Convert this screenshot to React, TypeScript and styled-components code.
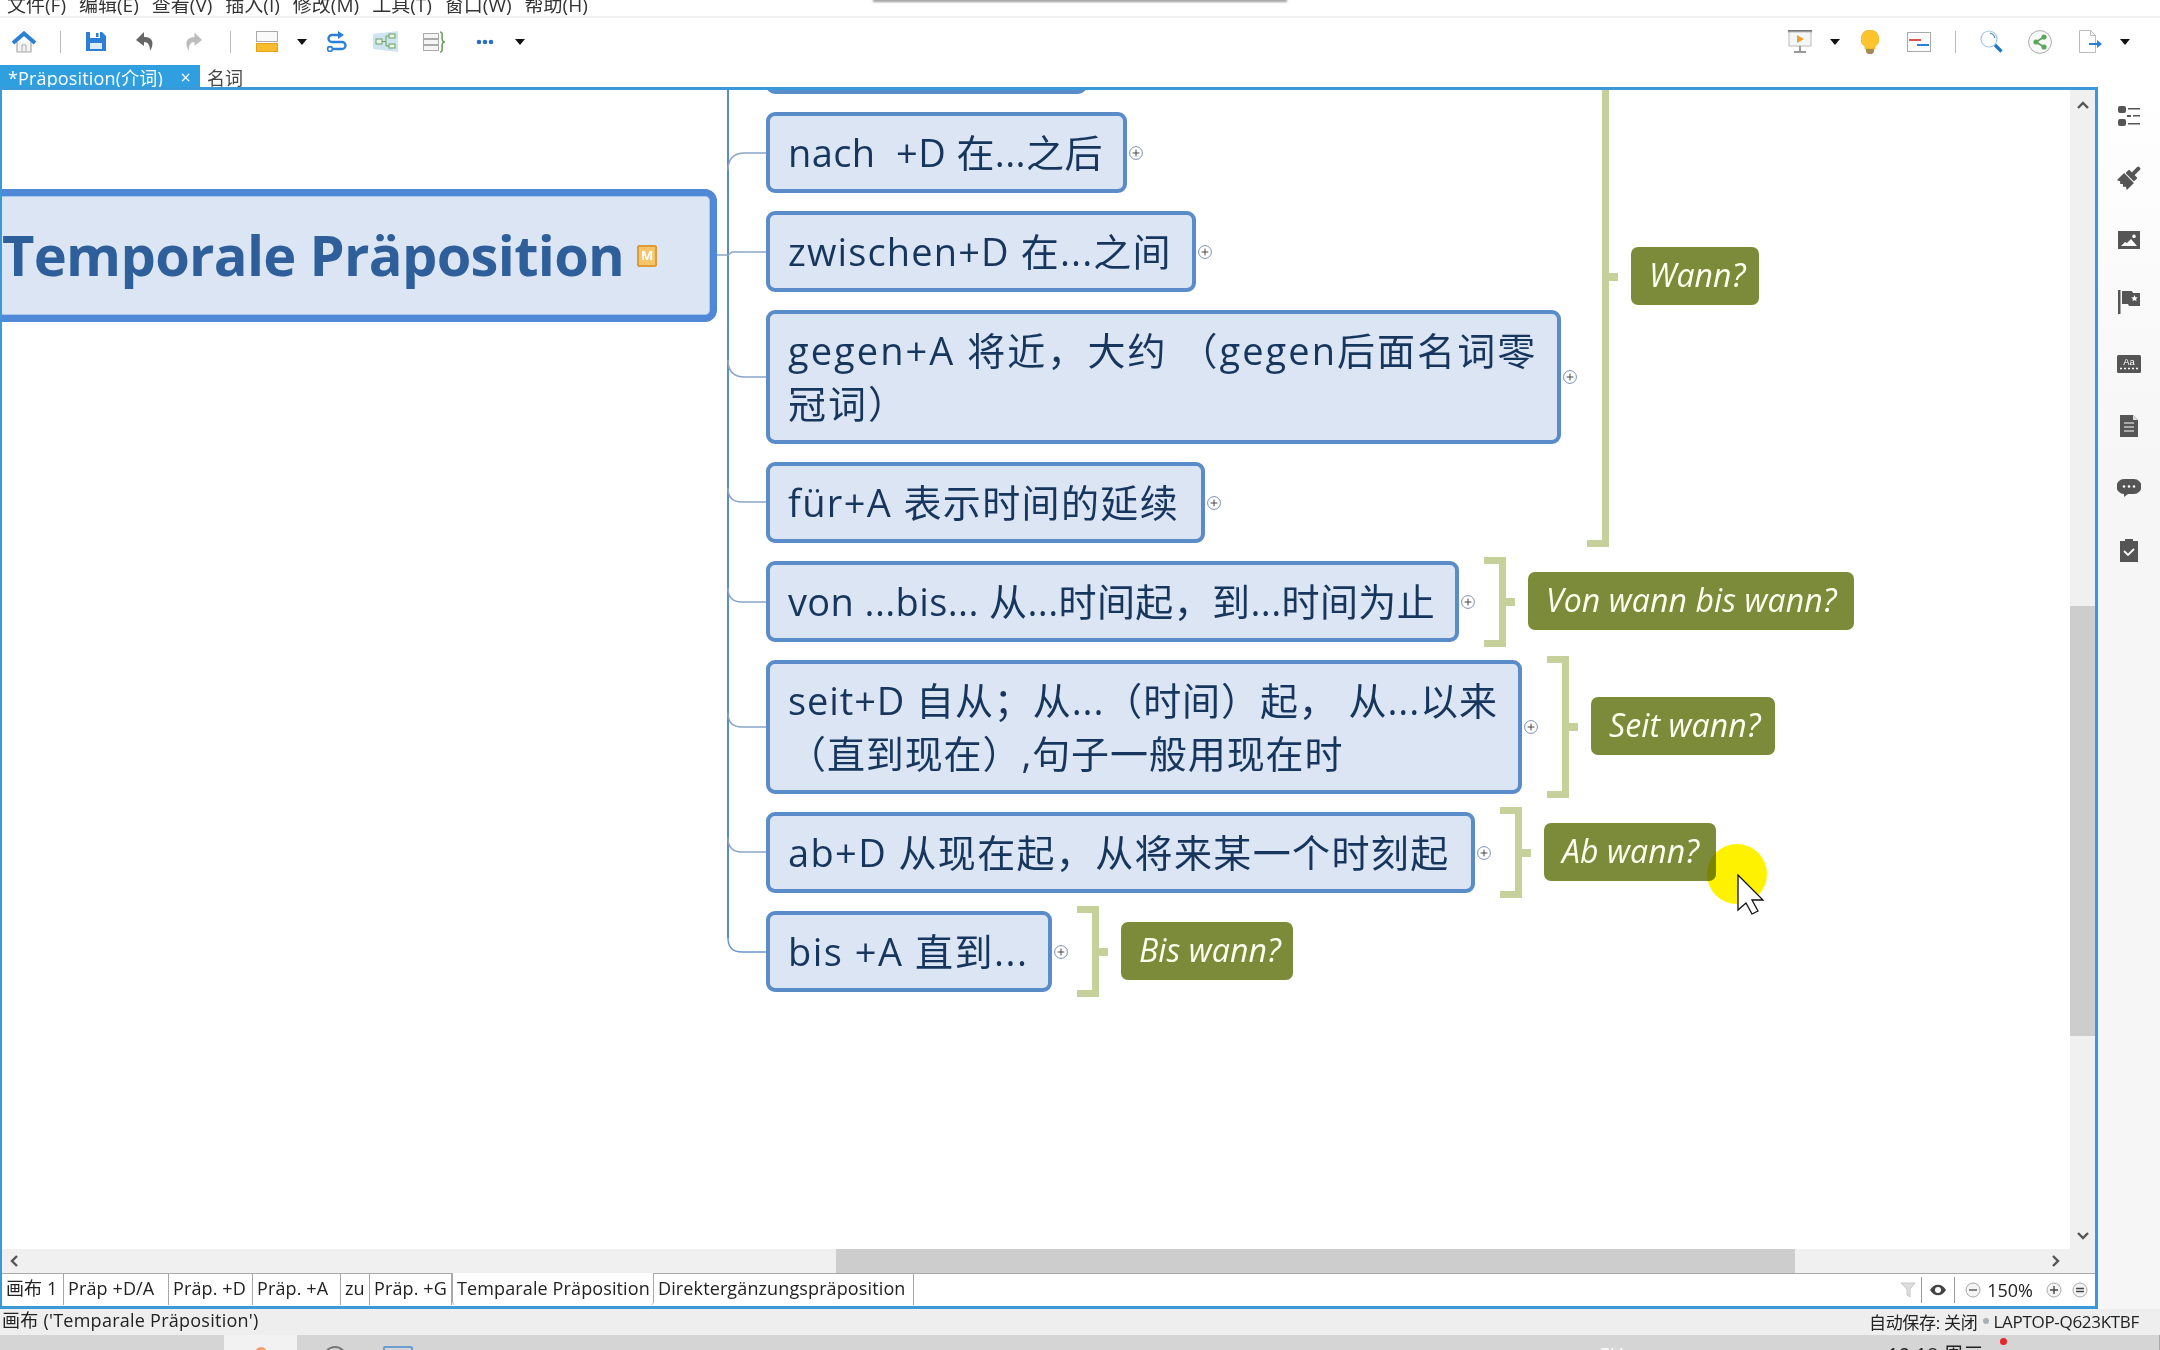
import React from "react";
import styled, { createGlobalStyle } from "styled-components";

const SANS = `"Open Sans", "Noto Sans CJK SC", sans-serif`;
const BLUE = "#3a9ad9";

const Global = createGlobalStyle`
	html, body {
		margin: 0;
		padding: 0;
		background: #fff;
	}
	* {
		box-sizing: border-box;
	}
`;

const Page = styled.div`
	position: relative;
	width: 2160px;
	height: 1350px;
	display: flex;
	flex-direction: column;
	overflow: hidden;
	font-family: ${SANS};
	color: #222;
`;

const MenuBar = styled.div`
	position: relative;
	height: 18px;
	flex: none;
	display: flex;
	gap: 13px;
	padding-left: 7px;
	overflow: hidden;
	border-bottom: 2px solid #f1f1f1;
`;

const MenuItem = styled.span`
	margin-top: -4px;
	font-size: 19px;
	line-height: 18px;
	color: #333;
	white-space: nowrap;
`;

const BlurTitle = styled.div`
	position: absolute;
	top: -1px;
	left: 873px;
	width: 414px;
	height: 3px;
	background: #999;
	filter: blur(1px);
`;

const ToolBar = styled.div`
	height: 47px;
	flex: none;
	display: flex;
	align-items: center;
	padding: 0 30px 0 11px;
`;

const Tool = styled.span<{ $ml?: number }>`
	display: flex;
	flex: none;
	margin-left: ${(p) => p.$ml ?? 0}px;
`;

const ToolSep = styled.span<{ $ml: number }>`
	width: 1px;
	height: 22px;
	flex: none;
	margin-left: ${(p) => p.$ml}px;
	background: #bbb;
`;

const Caret = styled.span<{ $ml: number }>`
	width: 0;
	height: 0;
	flex: none;
	margin-left: ${(p) => p.$ml}px;
	border-left: 5.5px solid transparent;
	border-right: 5.5px solid transparent;
	border-top: 6px solid #111;
`;

const ToolSpring = styled.span`
	flex: 1;
`;

const TabRow = styled.div`
	height: 22px;
	flex: none;
	display: flex;
	align-items: stretch;
`;

const DocTab = styled.div`
	width: 200px;
	display: flex;
	align-items: center;
	justify-content: space-between;
	padding: 2px 9px 0 8px;
	background: #2f9fe0;
	color: #fff;
	font-size: 18px;
	letter-spacing: 0.15px;
	white-space: nowrap;
`;

const DocTabPlain = styled.div`
	margin-left: 7px;
	font-size: 18px;
	line-height: 26px;
	color: #444;
`;

const Workspace = styled.div`
	height: 1222px;
	flex: none;
	display: flex;
`;

const Frame = styled.div`
	width: 2098px;
	flex: none;
	display: grid;
	grid-template-columns: 2068px 25px;
	grid-template-rows: 1159px 24px 32px;
	border: 3px solid ${BLUE};
	border-left-width: 2px;
`;

const Canvas = styled.div`
	grid-column: 1;
	grid-row: 1;
	position: relative;
	overflow: hidden;
	background: #fff;
`;

const Links = styled.svg`
	position: absolute;
	left: 0;
	top: 0;
	pointer-events: none;
`;

const RootTopic = styled.div`
	position: absolute;
	left: -14px;
	top: 99px;
	width: 729px;
	height: 133px;
	display: flex;
	align-items: center;
	gap: 13px;
	padding: 0 0 3px 7px;
	background: #dbe5f3;
	border: 7px solid #4f88d6;
	border-radius: 12px;
	box-shadow: inset 0 0 0 1px #a9c7ee;
	color: #2f5f9b;
	font-size: 56px;
	font-weight: 700;
	letter-spacing: -0.7px;
	white-space: nowrap;
`;

const MarkerM = styled.span`
	width: 20px;
	height: 22px;
	flex: none;
	display: flex;
	align-items: center;
	justify-content: center;
	margin-top: 3px;
	background: #f6c56a;
	border: 2px solid #dd9d36;
	border-radius: 2px;
	color: #fff;
	font-size: 13px;
	line-height: 1;
	font-weight: 700;
	letter-spacing: 0;
`;

const TopicColumn = styled.div`
	position: absolute;
	left: 764px;
	top: -77px;
	display: flex;
	flex-direction: column;
	gap: 18px;
`;

const Row = styled.div`
	display: flex;
	align-items: center;
`;

const Topic = styled.div<{ $w: number; $ls?: number }>`
	width: ${(p) => p.$w}px;
	flex: none;
	padding: 10px 0 10px 18px;
	background: #dbe5f3;
	border: 4px solid #5a8cca;
	border-radius: 9px;
	color: #17365d;
	font-size: 38px;
	letter-spacing: ${(p) => p.$ls ?? 0}px;
	line-height: 53px;
	white-space: nowrap;
`;

const ExpanderIcon = styled.svg`
	flex: none;
	margin-left: 2px;
`;

const Bracket = styled.div<{ $h: number }>`
	position: relative;
	width: 22px;
	height: ${(p) => p.$h}px;
	flex: none;
	border: 7px solid #c6d09b;
	border-left: none;
	&::after {
		content: "";
		position: absolute;
		left: 15px;
		top: calc(50% - 4px);
		width: 16px;
		height: 8px;
		background: #c6d09b;
	}
`;

const SummaryBracket = styled(Bracket)`
	margin: -6px 0 -6px 9px;
`;

const Label = styled.div<{ $w: number }>`
	width: ${(p) => p.$w}px;
	height: 58px;
	flex: none;
	margin: -2px 0 0 22px;
	padding-left: 18px;
	background: #7b8b3a;
	border-radius: 7px;
	color: #fffff0;
	font-size: 32px;
	font-style: italic;
	letter-spacing: 0.1px;
	line-height: 56px;
	white-space: nowrap;
`;

const WannGroup = styled.div`
	position: absolute;
	left: 1585px;
	top: -83px;
	display: flex;
	align-items: center;
`;

const MouseSpot = styled.div`
	position: absolute;
	left: 1705px;
	top: 754px;
	width: 60px;
	height: 60px;
	border-radius: 50%;
	background: #fff200;
	mix-blend-mode: multiply;
`;

const Pointer = styled.svg`
	position: absolute;
	left: 1735px;
	top: 784px;
`;

const VScroll = styled.div`
	grid-column: 2;
	grid-row: 1 / 3;
	display: flex;
	flex-direction: column;
	background: #f0f0f0;
`;

const HScroll = styled.div`
	grid-column: 1;
	grid-row: 2;
	display: flex;
	background: #f0f0f0;
`;

const ScrollButton = styled.div<{ $w: number; $h: number; $auto?: boolean }>`
	width: ${(p) => p.$w}px;
	height: ${(p) => p.$h}px;
	flex: none;
	display: flex;
	align-items: center;
	justify-content: center;
	${(p) => (p.$auto ? "margin: auto 0 0 auto;" : "")}
`;

const ScrollThumb = styled.div<{ $start: number; $len: number; $vertical?: boolean }>`
	flex: none;
	background: #cdcdcd;
	${(p) =>
		p.$vertical
			? `margin-top: ${p.$start}px; height: ${p.$len}px;`
			: `margin-left: ${p.$start}px; width: ${p.$len}px;`}
`;

const SheetBar = styled.div`
	grid-column: 1 / 3;
	grid-row: 3;
	display: flex;
	align-items: stretch;
	background: #fff;
	border-top: 1px solid #a8a8a8;
`;

const Sheet = styled.div<{ $w: number; $active?: boolean }>`
	width: ${(p) => p.$w}px;
	flex: none;
	padding: 0 0 0 4px;
	font-size: 18px;
	line-height: 29px;
	letter-spacing: 0.12px;
	white-space: nowrap;
	border-right: 1px solid #a8a8a8;
	${(p) =>
		p.$active
			? `margin-top: -1px; line-height: 31px; border-left: 1px solid #a8a8a8; border-radius: 0 0 4px 4px; background: #fff;`
			: ""}
`;

const SheetTools = styled.div`
	margin-left: auto;
	display: flex;
	align-items: center;
	padding-right: 7px;
`;

const ViewSep = styled.span<{ $ml: number }>`
	width: 1px;
	height: 26px;
	margin-left: ${(p) => p.$ml}px;
	background: #9a9a9a;
`;

const Zoom = styled.span`
	margin-left: 6px;
	font-size: 18px;
	letter-spacing: 0;
`;

const SideBar = styled.div`
	width: 62px;
	flex: none;
	display: flex;
	flex-direction: column;
	align-items: center;
	gap: 38px;
	padding: 17px 0 0 0;
	background: linear-gradient(#fff, #f6f6f6 30%);
`;

const SideIcon = styled.svg`
	flex: none;
	fill: #555;
`;

const StatusBar = styled.div`
	height: 26px;
	flex: none;
	display: flex;
	align-items: center;
	padding: 0 21px 2px 2px;
	background: #eeeeee;
	font-size: 18px;
	letter-spacing: 0.25px;
	white-space: nowrap;
`;

const StatusName = styled.span`
	margin-bottom: 4px;
`;

const StatusRight = styled.div`
	margin-left: auto;
	display: flex;
	align-items: center;
	font-size: 17px;
	letter-spacing: -0.3px;
`;

const StatusDot = styled.span`
	width: 6px;
	height: 6px;
	margin: 0 4px 0 6px;
	border-radius: 50%;
	background: #aab0b5;
`;

const TaskBar = styled.div`
	position: relative;
	flex: 1;
	display: flex;
	overflow: hidden;
	background: #d5d5d5;
	border-right: 1px solid #aaa;
`;

const ActiveTask = styled.div`
	width: 73px;
	margin-left: 224px;
	display: flex;
	justify-content: center;
	padding-top: 12px;
	background: #f2f2f2;
`;

const TaskGlyph = styled.span<{ $color: string; $ml?: number; $round?: boolean; $w: number }>`
	width: ${(p) => p.$w}px;
	height: 24px;
	margin-left: ${(p) => p.$ml ?? 0}px;
	margin-top: 11px;
	flex: none;
	border: 2px solid ${(p) => p.$color};
	border-radius: ${(p) => (p.$round ? "50%" : "2px")};
`;

const TaskText = styled.span<{ $ml: number; $color?: string }>`
	margin-left: ${(p) => p.$ml}px;
	margin-top: 8px;
	font-size: 20px;
	line-height: 24px;
	white-space: nowrap;
	color: ${(p) => p.$color ?? "#222"};
`;

const RedDot = styled.span`
	position: absolute;
	left: 2000px;
	top: 3px;
	width: 7px;
	height: 7px;
	border-radius: 50%;
	background: #e8262a;
`;

const Expander = () => (
	<ExpanderIcon width="14" height="14" viewBox="0 0 14 14">
		<circle cx="7" cy="7" r="6.4" fill="#fff" stroke="#7d8fb3" />
		<path d="M7 3.6v6.8M3.6 7h6.8" stroke="#444" />
	</ExpanderIcon>
);

const Chevron = ({ d }: { d: string }) => (
	<svg width="14" height="14" viewBox="0 0 14 14">
		<path d={d} fill="none" stroke="#555" strokeWidth="2.4" />
	</svg>
);

const rows = [
	{ w: 321, text: <>&nbsp;</> },
	{ w: 361, ls: 0.4, text: <>nach &nbsp;+D 在...之后</>, expand: true },
	{ w: 430, ls: 1.14, text: <>zwischen+D 在...之间</>, expand: true },
	{ w: 795, ls: 2.05, text: <>gegen+A 将近，大约 （gegen后面名词零<br />冠词）</>, expand: true },
	{ w: 439, ls: 1.37, text: <>für+A 表示时间的延续</>, expand: true },
	{ w: 693, ls: 0.38, text: <>von ...bis... 从...时间起，到...时间为止</>, expand: true, label: "Von wann bis wann?", lw: 326, bh: 90 },
	{ w: 756, ls: 0.9, text: <>seit+D 自从；从...（时间）起， 从...以来<br />（直到现在）,句子一般用现在时</>, expand: true, label: "Seit wann?", lw: 184, bh: 142 },
	{ w: 709, ls: 1.37, text: <>ab+D 从现在起，从将来某一个时刻起</>, expand: true, label: "Ab wann?", lw: 172, bh: 91 },
	{ w: 286, ls: 1.5, text: <>bis +A 直到...</>, expand: true, label: "Bis wann?", lw: 172, bh: 91 },
];

const sheets = [
	{ w: 62, name: "画布 1" },
	{ w: 105, name: "Präp +D/A" },
	{ w: 84, name: "Präp. +D" },
	{ w: 88, name: "Präp. +A" },
	{ w: 29, name: "zu" },
	{ w: 82, name: "Präp. +G" },
	{ w: 202, name: "Temparale Präposition", active: true },
	{ w: 260, name: "Direktergänzungspräposition" },
];

const menus = ["文件(F)", "编辑(E)", "查看(V)", "插入(I)", "修改(M)", "工具(T)", "窗口(W)", "帮助(H)"];

export default function App() {
	return (
		<Page>
			<Global />
			<MenuBar>
				{menus.map((m) => (
					<MenuItem key={m}>{m}</MenuItem>
				))}
				<BlurTitle />
			</MenuBar>

			<ToolBar>
				<Tool>
					<svg width="26" height="22" viewBox="0 0 26 22">
						<path d="M6 11v10h14V11" fill="#f4f4f4" stroke="#aaa" strokeWidth="1.2" />
						<path d="M11 21v-7h4v7" fill="none" stroke="#aaa" />
						<path d="M2 12 13 2.5 24 12" fill="none" stroke="#2b80d6" strokeWidth="4" />
					</svg>
				</Tool>
				<ToolSep $ml={23} />
				<Tool $ml={24}>
					<svg width="22" height="21" viewBox="0 0 22 21">
						<path d="M1 1h16l4 4v15H1z" fill="#2b80d6" />
						<rect x="5" y="1" width="10" height="6" fill="#fff" />
						<rect x="11" y="2" width="2.5" height="4" fill="#2b80d6" />
						<rect x="5" y="12" width="12" height="6" fill="#dcebf8" />
					</svg>
				</Tool>
				<Tool $ml={28}>
					<svg width="19" height="21" viewBox="0 0 19 21">
						<path d="M9 1 1 9l8 6v-4c4 0 6 3 6 9 4-6 4-14-6-14z" fill="#666" />
					</svg>
				</Tool>
				<Tool $ml={31}>
					<svg width="18" height="21" viewBox="0 0 19 21">
						<path d="M10 1l8 8-8 6v-4c-4 0-6 3-6 9C0 14 0 6 10 6z" fill="#bdbdbd" />
					</svg>
				</Tool>
				<ToolSep $ml={27} />
				<Tool $ml={25}>
					<svg width="22" height="21" viewBox="0 0 22 21">
						<rect x="0.5" y="0.5" width="21" height="10" fill="#fafafa" stroke="#aaa" />
						<rect x="0.5" y="12.5" width="21" height="8" fill="#f8bc2c" stroke="#e3a21c" />
					</svg>
				</Tool>
				<Caret $ml={19} />
				<Tool $ml={19}>
					<svg width="22" height="21" viewBox="0 0 22 21">
						<path d="M13 4H6a3.5 3.5 0 0 0 0 7h10a3.5 3.5 0 0 1 0 7H6" fill="none" stroke="#2b80d6" strokeWidth="2.4" />
						<path d="M12 0l6 4-6 4z" fill="#2b80d6" />
						<circle cx="4" cy="18" r="2.4" fill="#fff" stroke="#2b80d6" strokeWidth="1.6" />
					</svg>
				</Tool>
				<Tool $ml={25}>
					<svg width="25" height="21" viewBox="0 0 25 21">
						<path d="M0 3 25 0v21L0 18z" fill="#cfe4f3" />
						<rect x="3" y="8" width="6" height="5" fill="#e9f5e4" stroke="#6a9f5f" />
						<rect x="16" y="3" width="6" height="4" fill="#e9f5e4" stroke="#6a9f5f" />
						<rect x="16" y="13" width="6" height="4" fill="#e9f5e4" stroke="#6a9f5f" />
						<path d="M9 10.500h4M13 5v10M13 5h3M13 15h3" stroke="#6a9f5f" fill="none" />
					</svg>
				</Tool>
				<Tool $ml={25}>
					<svg width="24" height="22" viewBox="0 0 24 22">
						<rect x="0.5" y="2.500" width="15" height="5" fill="#f5f5f5" stroke="#aaa" />
						<rect x="0.5" y="8.500" width="15" height="5" fill="#f5f5f5" stroke="#aaa" />
						<rect x="0.5" y="14.500" width="15" height="5" fill="#f5f5f5" stroke="#aaa" />
						<path d="M17 1c3 0 2 3 2 6 0 3 1 4 3 4-2 0-3 1-3 4s1 6-2 6" fill="none" stroke="#6a9f5f" strokeWidth="1.6" />
					</svg>
				</Tool>
				<Tool $ml={29}>
					<svg width="18" height="6" viewBox="0 0 18 6">
						<circle cx="3" cy="3" r="2.300" fill="#2b70c0" />
						<circle cx="9" cy="3" r="2.300" fill="#2b70c0" />
						<circle cx="15" cy="3" r="2.300" fill="#2b70c0" />
					</svg>
				</Tool>
				<Caret $ml={21} />

				<ToolSpring />

				<Tool>
					<svg width="24" height="23" viewBox="0 0 24 23">
						<rect width="24" height="2.500" fill="#777" />
						<rect x="1" y="2" width="22" height="14" fill="#f6f6f6" stroke="#bbb" />
						<path d="M9 5l7 4-7 4z" fill="#ef9f2c" />
						<path d="M12 16v5M6 22h12" stroke="#777" strokeWidth="1.4" />
					</svg>
				</Tool>
				<Caret $ml={18} />
				<Tool $ml={21}>
					<svg width="18" height="24" viewBox="0 0 18 24">
						<path d="M9 0a9 9 0 0 0-5 16.500V19h10v-2.500A9 9 0 0 0 9 0z" fill="#fdc42d" stroke="#eba91a" strokeWidth="0.6" />
						<path d="M5 19h8v3l-2 2H7l-2-2z" fill="#a58a55" />
					</svg>
				</Tool>
				<Tool $ml={28}>
					<svg width="24" height="20" viewBox="0 0 24 20">
						<rect x="0.5" y="0.5" width="23" height="19" fill="#fcfcfc" stroke="#aaa" />
						<path d="M2 8h12" stroke="#d9534f" strokeWidth="2" />
						<path d="M10 13h12" stroke="#2b80d6" strokeWidth="2" />
					</svg>
				</Tool>
				<ToolSep $ml={24} />
				<Tool $ml={24}>
					<svg width="23" height="23" viewBox="0 0 23 23">
						<circle cx="9" cy="9" r="8" fill="#fff" stroke="#a9c4dc" strokeWidth="1.2" />
						<path d="M10 3a6 6 0 0 1 5 5" fill="none" stroke="#2b70c0" />
						<path d="M15 15l6.500 6.500" stroke="#1f74c8" strokeWidth="3.200" />
					</svg>
				</Tool>
				<Tool $ml={25}>
					<svg width="24" height="24" viewBox="0 0 24 24">
						<circle cx="12" cy="12" r="11.400" fill="#fafafa" stroke="#aaa" />
						<path d="M16 7 8 12l8 5" fill="none" stroke="#5aa85a" strokeWidth="1.800" />
						<circle cx="16" cy="7" r="2.600" fill="#5aa85a" />
						<circle cx="8" cy="12" r="2.600" fill="#5aa85a" />
						<circle cx="16" cy="17" r="2.600" fill="#5aa85a" />
					</svg>
				</Tool>
				<Tool $ml={27}>
					<svg width="23" height="23" viewBox="0 0 23 23">
						<path d="M0.5 0.5h11l5 5v17h-16z" fill="#fff" stroke="#bbb" />
						<path d="M11.500 0.500v5h5" fill="none" stroke="#bbb" />
						<path d="M10 14h9" stroke="#2b80d6" strokeWidth="2" />
						<path d="M18 10l5 4-5 4z" fill="#2b80d6" />
					</svg>
				</Tool>
				<Caret $ml={18} />
			</ToolBar>

			<TabRow>
				<DocTab>
					<span>*Präposition(介词)</span>
					<span>×</span>
				</DocTab>
				<DocTabPlain>名词</DocTabPlain>
			</TabRow>

			<Workspace>
				<Frame>
					<Canvas>
						<Links width="2068" height="1159">
							<path d="M726 0V848q0 14 14 14h24" fill="none" stroke="#6c97cd" strokeWidth="1.5" />
							<path d="M726 0V848" fill="none" stroke="#5a8cca" strokeWidth="2" />
							<path d="M715 165h11l4-3h34" fill="none" stroke="#8aa5c6" strokeWidth="1.5" />
							<path d="M726 80q0-17 17-17h21" fill="none" stroke="#8aa5c6" strokeWidth="1.500" />
							<path d="M726 270q0 17 17 17h21" fill="none" stroke="#8aa5c6" strokeWidth="1.500" />
							<path d="M726 398q0 14 14 14h24" fill="none" stroke="#8aa5c6" strokeWidth="1.500" />
							<path d="M726 498q0 14 14 14h24" fill="none" stroke="#8aa5c6" strokeWidth="1.500" />
							<path d="M726 623q0 14 14 14h24" fill="none" stroke="#8aa5c6" strokeWidth="1.500" />
							<path d="M726 748q0 14 14 14h24" fill="none" stroke="#8aa5c6" strokeWidth="1.500" />
						</Links>

						<RootTopic>
							Temporale Präposition
							<MarkerM>M</MarkerM>
						</RootTopic>

						<TopicColumn>
							{rows.map((r, i) => (
								<Row key={i}>
									<Topic $w={r.w} $ls={r.ls}>{r.text}</Topic>
									{r.expand && <Expander />}
									{r.label && <SummaryBracket $h={r.bh as number} />}
									{r.label && <Label $w={r.lw as number}>{r.label}</Label>}
								</Row>
							))}
						</TopicColumn>

						<WannGroup>
							<Bracket $h={540} />
							<Label $w={128}>Wann?</Label>
						</WannGroup>

						<MouseSpot />
						<Pointer width="28" height="41" viewBox="0 0 28 41">
							<path d="M1 1v35l8-7 6 11 6-3-6-11h11z" fill="#fff" stroke="#111" strokeWidth="1.300" />
						</Pointer>
					</Canvas>

					<VScroll>
						<ScrollButton $w={25} $h={30}>
							<Chevron d="M2 10l5-5 5 5" />
						</ScrollButton>
						<ScrollThumb $vertical $start={486} $len={430} />
						<ScrollButton $w={25} $h={74} $auto>
							<Chevron d="M2 4l5 5 5-5" />
						</ScrollButton>
					</VScroll>

					<HScroll>
						<ScrollButton $w={24} $h={24}>
							<Chevron d="M10 2 5 7l5 5" />
						</ScrollButton>
						<ScrollThumb $start={810} $len={959} />
						<ScrollButton $w={28} $h={24} $auto>
							<Chevron d="M4 2l5 5-5 5" />
						</ScrollButton>
					</HScroll>

					<SheetBar>
						{sheets.map((s) => (
							<Sheet key={s.name} $w={s.w} $active={s.active}>
								{s.name}
							</Sheet>
						))}
						<SheetTools>
							<svg width="16" height="18" viewBox="0 0 16 18">
								<path d="M1 2h14l-5 6v8l-3-2V8z" fill="#ddd" stroke="#c8c8c8" />
							</svg>
							<ViewSep $ml={5} />
							<svg width="32" height="14" viewBox="-8 0 32 14" style={{ flex: "none" }}>
								<path d="M0 7c4-7 12-7 16 0-4 7-12 7-16 0z" fill="#444" />
								<circle cx="8" cy="7" r="3" fill="#fff" />
							</svg>
							<ViewSep $ml={0} />
							<svg width="16" height="16" viewBox="0 0 16 16" style={{ marginLeft: 10 }}>
								<circle cx="8" cy="8" r="7" fill="#f4f4f4" stroke="#aaa" />
								<path d="M4 8h8" stroke="#555" strokeWidth="1.400" />
							</svg>
							<Zoom>150%</Zoom>
							<svg width="16" height="16" viewBox="0 0 16 16" style={{ marginLeft: 13 }}>
								<circle cx="8" cy="8" r="7" fill="#f4f4f4" stroke="#aaa" />
								<path d="M4 8h8M8 4v8" stroke="#444" strokeWidth="1.400" />
							</svg>
							<svg width="16" height="16" viewBox="0 0 16 16" style={{ marginLeft: 10 }}>
								<circle cx="8" cy="8" r="7" fill="#f4f4f4" stroke="#aaa" />
								<path d="M4 6.500h8M4 9.500h8" stroke="#444" strokeWidth="1.400" />
							</svg>
						</SheetTools>
					</SheetBar>
				</Frame>

				<SideBar>
					<SideIcon width="24" height="24" viewBox="0 0 24 24">
						<rect x="1" y="2" width="8" height="7" rx="2" />
						<rect x="1" y="15" width="8" height="7" rx="2" />
						<path d="M11 4h12v1.500H11zM10 11h4v2h-4zM16 11h7v1.500h-7zM11 19h12v1.500H11z" />
					</SideIcon>
					<SideIcon width="24" height="24" viewBox="0 0 24 24">
						<g transform="rotate(45 12 12)">
							<rect x="10" y="-3" width="4" height="10" rx="1.500" />
							<rect x="6" y="6" width="12" height="5" rx="1" />
							<path d="M5 12h14v10l-3-1.500-2 2-2-2-2 2-2-2-3 1.500z" />
						</g>
					</SideIcon>
					<SideIcon width="24" height="24" viewBox="0 0 24 24">
						<path d="M1 3h22v18H1zM4 18h16l-6-7-4 4-2-1zM17 6.500a1.800 1.800 0 1 0 .01 0z" fillRule="evenodd" />
					</SideIcon>
					<SideIcon width="24" height="24" viewBox="0 0 24 24">
						<path d="M1 0h2.500v24H1zM5 1h10l1 2h7v13H12l-1-2H5z" />
						<path d="M17.500 5l1 2.300 2.300.2-1.800 1.500.6 2.300-2.100-1.300-2 1.300.5-2.300-1.700-1.500 2.300-.2z" fill="#fff" />
					</SideIcon>
					<SideIcon width="24" height="24" viewBox="0 0 24 24">
						<rect y="3" width="24" height="18" rx="1.500" />
						<text x="12" y="13" textAnchor="middle" fontSize="9.500" fontFamily="Liberation Sans, sans-serif" fill="#fff">Aa</text>
						<path d="M3 16.500h18" stroke="#fff" strokeWidth="1.300" strokeDasharray="2 2" />
					</SideIcon>
					<SideIcon width="24" height="24" viewBox="0 0 24 24">
						<path d="M3 1h13l5 5v17H3z" />
						<path d="M7 9h10M7 13h10M7 17h10" stroke="#fff" strokeWidth="1.200" />
						<path d="M16 1v5h5z" fill="#ddd" />
					</SideIcon>
					<SideIcon width="24" height="24" viewBox="0 0 24 24">
						<path d="M7 3h10a7 7 0 0 1 0 15H11l-4 3 0-3a7.500 7.500 0 0 1 0-15z" />
						<circle cx="7" cy="10.500" r="1.300" fill="#fff" />
						<circle cx="12" cy="10.500" r="1.300" fill="#fff" />
						<circle cx="17" cy="10.500" r="1.300" fill="#fff" />
					</SideIcon>
					<SideIcon width="24" height="24" viewBox="0 0 24 24">
						<path d="M3 3h5V1h8v2h5v21H3z" />
						<path d="M7 13l4 4 6-6" fill="none" stroke="#fff" strokeWidth="1.800" />
					</SideIcon>
				</SideBar>
			</Workspace>

			<StatusBar>
				<StatusName>画布 ('Temparale Präposition')</StatusName>
				<StatusRight>
					自动保存: 关闭
					<StatusDot />
					LAPTOP-Q623KTBF
				</StatusRight>
			</StatusBar>

			<TaskBar>
				<ActiveTask>
					<svg width="12" height="12" viewBox="0 0 12 12">
						<circle cx="6" cy="6" r="6" fill="#f0a070" />
					</svg>
				</ActiveTask>
				<TaskGlyph $color="#777" $round $w={24} $ml={26} />
				<TaskGlyph $color="#6a9ed0" $w={30} $ml={36} />
				<TaskText $ml={1184} $color="#fff">CH</TaskText>
				<TaskText $ml={263}>10:18 周三</TaskText>
				<RedDot />
			</TaskBar>
		</Page>
	);
}
